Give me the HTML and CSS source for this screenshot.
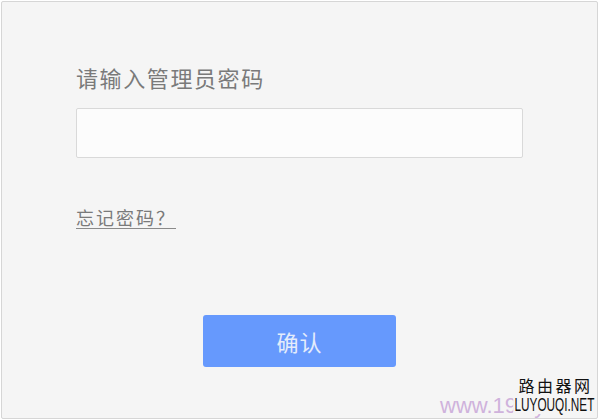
FILE: index.html
```html
<!DOCTYPE html>
<html lang="zh-CN">
<head>
<meta charset="utf-8">
<title>登录</title>
<link rel="stylesheet" href="styles.css">
</head>
<body>
<div class="panel">
  <div class="label">请输入管理员密码</div>
  <input class="pwd" type="password">
  <a class="forgot" href="#">忘记密码？</a>
  <div class="actions">
    <button class="confirm">确认</button>
  </div>
</div>
<div class="watermark">
  <span class="wm-url">www.192ly.cn</span>
  <div class="wm-logo">
    <span class="wm-cn">路由器网</span>
    <span class="wm-en">LUYOUQI.NET</span>
  </div>
</div>
</body>
</html>
```
FILE: styles.css
```css
html, body {
  margin: 0;
  padding: 0;
  background: #ffffff;
}
body {
  width: 600px;
  height: 420px;
  position: relative;
  overflow: hidden;
  font-family: "Noto Sans CJK SC", "Liberation Sans", sans-serif;
}
.panel {
  box-sizing: border-box;
  margin: 1px 0 0 1px;
  width: 597px;
  height: 418px;
  background: #f5f5f5;
  border: 1px solid #d6d6d6;
  border-radius: 2px;
  padding: 59px 0 0 74px;
  display: flex;
  flex-direction: column;
  align-items: flex-start;
}
.label {
  font-size: 22px;
  line-height: 32px;
  color: #7a7a7a;
  letter-spacing: 1.6px;
}
.pwd {
  box-sizing: border-box;
  margin-top: 15px;
  width: 447px;
  height: 50px;
  background: #fcfcfc;
  border: 1px solid #d9d9d9;
  border-radius: 2px;
  outline: none;
}
.forgot {
  margin-top: 47px;
  font-size: 18px;
  line-height: 24px;
  color: #7a7a7a;
  letter-spacing: 2px;
  text-decoration: underline;
  text-underline-offset: 3px;
  text-decoration-color: #8a8a8a;
  text-decoration-thickness: 1px;
}
.actions {
  width: 447px;
  display: flex;
  justify-content: center;
  margin-top: 86px;
}
.confirm {
  width: 193px;
  height: 52px;
  border: none;
  border-radius: 3px;
  background: #6699fd;
  color: #e4ecfb;
  font-family: "Noto Sans CJK SC", "Liberation Sans", sans-serif;
  font-size: 22px;
  letter-spacing: 1px;
  padding: 0;
}
.watermark {
  position: absolute;
  left: 440px;
  top: 375px;
  width: 160px;
  height: 45px;
}
.wm-url {
  position: absolute;
  left: 0;
  top: 19px;
  font-family: "Liberation Sans", sans-serif;
  font-size: 22px;
  line-height: 24px;
  color: #cfb2dc;
  white-space: nowrap;
}
.wm-logo {
  position: absolute;
  left: 76px;
  top: 0;
  width: 76px;
  display: flex;
  flex-direction: column;
  align-items: center;
}
.wm-cn {
  font-size: 16px;
  line-height: 21px;
  color: #111;
  letter-spacing: 2.5px;
  margin-left: 3px;
  white-space: nowrap;
}
.wm-en {
  background: #f5f5f5;
  font-family: "Liberation Sans", sans-serif;
  font-size: 19px;
  line-height: 18px;
  color: #111;
  padding: 0 2px;
  white-space: nowrap;
  transform: scaleX(0.62);
}
```
